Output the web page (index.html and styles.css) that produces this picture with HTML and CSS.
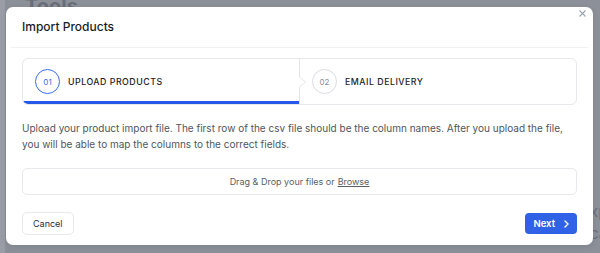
FILE: index.html
```html
<!DOCTYPE html>
<html lang="en">
<head>
    <meta charset="UTF-8">
    <meta name="viewport" content="width=device-width, initial-scale=1.0">
    <title>Import Products</title>
    <link rel="stylesheet" href="styles.css">
</head>
<body>
    <div class="page">
        <h1 class="page-title">Tools</h1>
        <div class="page-side">
            <span>xp</span>
            <span>ca</span>
        </div>
    </div>

    <div class="modal">
        <button class="close-button" aria-label="Close">
            <svg width="7" height="7" viewBox="0 0 7 7"><path d="M0.5 0.5L6.5 6.5M6.5 0.5L0.5 6.5" stroke="#9ca3af" stroke-width="1.1" fill="none"/></svg>
        </button>
        <div class="modal-header">
            <h2>Import Products</h2>
        </div>
        <div class="modal-body">
            <div class="steps">
                <div class="step active">
                    <span class="step-num">01</span>
                    <span class="step-label">Upload Products</span>
                </div>
                <div class="step">
                    <svg class="step-sep" viewBox="0 0 7 45" preserveAspectRatio="none"><path d="M0.5 0V18L6.5 23L0.5 28V45" stroke="#e3e5e9" fill="none" vector-effect="non-scaling-stroke"/></svg>
                    <span class="step-num">02</span>
                    <span class="step-label">Email Delivery</span>
                </div>
            </div>
            <p class="intro-text">Upload your product import file. The first row of the csv file should be the column names. After you upload the file, you will be able to map the columns to the correct fields.</p>
            <div class="dropzone">Drag &amp; Drop your files or <a href="#">Browse</a></div>
        </div>
        <div class="modal-footer">
            <button class="cancel-button">Cancel</button>
            <button class="next-button">Next
                <svg width="5" height="8" viewBox="0 0 5 8"><path d="M1 1L4 4L1 7" stroke="#fff" stroke-width="1.4" fill="none" stroke-linecap="round" stroke-linejoin="round"/></svg>
            </button>
        </div>
    </div>
</body>
</html>
```

FILE: styles.css
```css
body {
    margin: 0;
    font-family: Inter, "Liberation Sans", sans-serif;
    background: #9a9da6;
    height: 253px;
    overflow: hidden;
}
.page {
    margin-left: 5px;
    height: 253px;
    background: #8c9099;
    position: relative;
}
.page-title {
    margin: 0;
    padding: 0 0 0 20px;
    font-size: 20px;
    font-weight: 700;
    color: #6a6e78;
    line-height: 12px;
}
.page-side {
    position: absolute;
    right: -8px;
    top: 200px;
    display: flex;
    flex-direction: column;
    font-size: 16px;
    color: #6a6e78;
    line-height: 22px;
}
.modal {
    position: absolute;
    left: 6px;
    top: 7px;
    width: 587px;
    background: #fff;
    border-radius: 7px;
    box-shadow: 0 2px 6px rgba(0, 0, 0, 0.1);
}
.close-button {
    position: absolute;
    top: 3px;
    right: 7px;
    border: none;
    background: none;
    padding: 0;
    line-height: 0;
}
.modal-header {
    margin: 0 5px;
    padding: 11px 11px;
    border-bottom: 1px solid #eff0f2;
}
.modal-header h2 {
    margin: 0;
    font-size: 12px;
    font-weight: 500;
    line-height: 18px;
    color: #1a1d24;
}
.modal-body {
    padding: 10px 16px 0;
}
.steps {
    display: flex;
    height: 45px;
    border: 1px solid #e6e8eb;
    border-radius: 6px;
    overflow: hidden;
}
.step {
    flex: 1;
    display: flex;
    align-items: center;
    gap: 8px;
    padding-left: 12px;
    position: relative;
}
.step + .step {
    padding-left: 13px;
}
.step-sep {
    position: absolute;
    left: 0;
    top: 0;
    width: 7px;
    height: 100%;
}
.step.active::after {
    content: "";
    position: absolute;
    left: 0;
    right: 0;
    bottom: 0;
    height: 3px;
    background: #2458e8;
}
.step-num {
    width: 23px;
    height: 23px;
    border: 1.5px solid #d9dce1;
    border-radius: 50%;
    display: flex;
    align-items: center;
    justify-content: center;
    font-size: 8px;
    color: #8a8f98;
}
.step.active .step-num {
    border-color: #3b6cf5;
    color: #3b6cf5;
}
.step-label {
    font-size: 8.8px;
    font-weight: 500;
    letter-spacing: 0.5px;
    text-transform: uppercase;
    color: #1f2229;
}
.intro-text {
    margin: 16px 0 0;
    font-size: 10px;
    line-height: 15.5px;
    color: #50555e;
}
.dropzone {
    margin-top: 16px;
    height: 25px;
    border: 1px solid #e6e8eb;
    border-radius: 5px;
    display: flex;
    align-items: center;
    justify-content: center;
    font-size: 9px;
    color: #5a5f68;
}
.dropzone a {
    color: #5a5f68;
    margin-left: 3px;
}
.modal-footer {
    display: flex;
    justify-content: space-between;
    align-items: center;
    padding: 17px 16px 10px;
}
.cancel-button {
    height: 23px;
    padding: 0 10px;
    border: 1px solid #e6e8eb;
    border-radius: 5px;
    background: #fff;
    font-family: inherit;
    font-size: 9px;
    color: #2a2d33;
}
.next-button {
    height: 21px;
    padding: 0 8px;
    border: none;
    border-radius: 4px;
    background: #2f62e6;
    display: flex;
    align-items: center;
    gap: 9px;
    font-family: inherit;
    font-size: 9.5px;
    font-weight: 600;
    color: #fff;
}
```
